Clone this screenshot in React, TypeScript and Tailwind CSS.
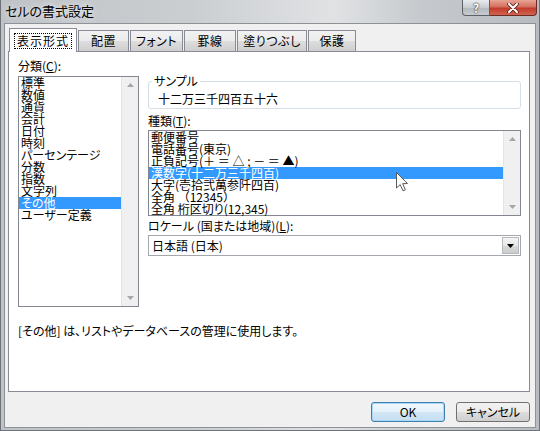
import React from "react";

const categories = [
  "標準",
  "数値",
  "通貨",
  "会計",
  "日付",
  "時刻",
  "パーセンテージ",
  "分数",
  "指数",
  "文字列",
  "その他",
  "ユーザー定義",
];

const kinds: { key: string; node: React.ReactNode; selected?: boolean }[] = [
  { key: "zip", node: "郵便番号" },
  { key: "tel", node: "電話番号(東京)" },
  {
    key: "sign",
    node: (
      <>
        正負記号(<span className="[font-feature-settings:normal]">＋ ＝ △ ; － ＝ ▲</span>)
      </>
    ),
  },
  { key: "kan", node: "漢数字(十二万三千四百)", selected: true },
  { key: "dai", node: "大字(壱拾弐萬参阡四百)" },
  {
    key: "zen",
    node: (
      <>
        全角 <span className="[font-feature-settings:normal]">（12345）</span>
      </>
    ),
  },
  { key: "zen2", node: "全角 桁区切り(12,345)" },
];

const tabs = [
  { label: "配置", w: "w-[51px]" },
  { label: "フォント", w: "w-[53px]" },
  { label: "罫線", w: "w-[52px]" },
  { label: "塗りつぶし", w: "w-[70px]" },
  { label: "保護", w: "w-[48px]" },
];

function Arrow({ up }: { up?: boolean }) {
  return (
    <svg width="7" height="4" viewBox="0 0 7 4">
      <path d={up ? "M0 4L3.5 0L7 4Z" : "M0 0L3.5 4L7 0Z"} fill="#a6a6a6" />
    </svg>
  );
}

function ScrollBar() {
  return (
    <div className="flex w-[17px] flex-col items-center justify-between border-l border-[#e4e4e4] bg-[#f0f0f0] py-[6px]">
      <Arrow up />
      <Arrow />
    </div>
  );
}

function Item({ children, selected }: { children: React.ReactNode; selected?: boolean }) {
  return (
    <div
      className={
        selected
          ? "h-[12px] whitespace-nowrap bg-[#3399ff] pl-[2px] leading-[12px] text-white"
          : "h-[12px] whitespace-nowrap pl-[2px] leading-[12px]"
      }
    >
      {children}
    </div>
  );
}

function Cursor() {
  return (
    <svg
      className="absolute left-[395px] top-[172px]"
      width="13"
      height="20"
      viewBox="0 0 13 20"
    >
      <path
        d="M0.5 0.5L0.5 16L4.2 12.6L7 18.8L9.4 17.8L6.7 11.7L11.5 11.5Z"
        fill="#ffffff"
        stroke="#5a5a5a"
        strokeWidth="1"
        strokeLinejoin="round"
      />
    </svg>
  );
}

export default function App() {
  return (
    <div className="relative flex h-[431px] w-[540px] flex-col overflow-hidden border-x border-b border-[#6e7379] bg-[linear-gradient(90deg,#bfc3c7_0%,#cbced1_35%,#e0e2e4_62%,#c6c9cd_78%,#b8bcc0_100%)] font-['Noto_Sans_CJK_JP','Liberation_Sans',sans-serif] text-[12px] text-black [font-feature-settings:'palt']">
      {/* title bar */}
      <div className="flex h-[23px] shrink-0 items-start justify-between">
        <div className="pl-[4px] pt-[3px] text-[13px] leading-[16px] [text-shadow:0_0_6px_#ffffff]">
          セルの書式設定
        </div>
        <div className="mr-[2px] flex">
          <div className="flex h-[16px] w-[28px] items-center justify-center rounded-bl-[4px] border border-t-0 border-[#5c6168] bg-[linear-gradient(180deg,#e8ebee_0%,#c9cdd2_50%,#b3b8be_51%,#c7ccd1_100%)] text-[12px] font-bold leading-[12px] text-white [text-shadow:0_0_2px_#333,0_0_1px_#333]">
            ?
          </div>
          <div className="flex h-[16px] w-[47px] items-center justify-center rounded-br-[4px] border border-l-0 border-t-0 border-[#6a2b27] bg-[linear-gradient(180deg,#e8a394_0%,#d4705f_45%,#c23b2c_55%,#d3634e_100%)]">
            <svg width="12" height="10" viewBox="0 0 12 10">
              <path d="M2 1L10 9M10 1L2 9" stroke="#5a1d18" strokeWidth="3.6" strokeLinecap="round" />
              <path d="M2 1L10 9M10 1L2 9" stroke="#ffffff" strokeWidth="2" strokeLinecap="round" />
            </svg>
          </div>
        </div>
      </div>

      {/* client area */}
      <div className="mx-[3px] mb-[2px] flex flex-1 flex-col border border-[#8c9298] bg-[#f0f0f0] pl-[3px] pr-[5px] pt-[4px]">
        {/* tabs */}
        <div className="flex h-[23px] items-end pl-[1px]">
          <div className="relative z-10 -mb-px flex h-[24px] w-[68px] items-center justify-center border border-b-0 border-[#898c95] bg-white">
            <span className="border border-dotted border-black px-[2px] leading-[14px] tracking-[1px]">
              表示形式
            </span>
          </div>
          {tabs.map((t) => (
            <div
              key={t.label}
              className={`ml-px flex h-[21px] items-center justify-center border border-b-0 border-[#898c95] bg-[linear-gradient(180deg,#f2f2f2_0%,#ebebeb_50%,#dddddd_51%,#cfcfcf_100%)] tracking-[0.5px] ${t.w}`}
            >
              {t.label}
            </div>
          ))}
        </div>

        {/* panel */}
        <div className="flex h-[341px] flex-col border border-[#898c95] bg-white">
          <div className="flex pl-[9px]">
            {/* left column */}
            <div className="w-[121px]">
              <div className="mt-[8px] h-[12px] leading-[12px]">
                分類(<span className="underline">C</span>):
              </div>
              <div className="mt-[4px] flex h-[231px] border border-[#828790]">
                <div className="flex-1">
                  {categories.map((c) => (
                    <Item key={c} selected={c === "その他"}>
                      {c}
                    </Item>
                  ))}
                </div>
                <ScrollBar />
              </div>
            </div>

            {/* right column */}
            <div className="ml-[9px] w-[373px]">
              <div className="relative mt-[29px] h-[28px] rounded-[3px] border border-[#d5dfe5] pl-[9px] pt-[11px]">
                <span className="absolute -top-[7px] left-[3px] bg-white px-[2px] leading-[12px]">
                  サンプル
                </span>
                <div className="h-[12px] leading-[12px]">十二万三千四百五十六</div>
              </div>

              <div className="mt-[6px] h-[12px] leading-[12px]">
                種類(<span className="underline">T</span>):
              </div>
              <div className="mt-[3px] flex h-[86px] border border-[#828790]">
                <div className="flex-1">
                  {kinds.map((k) => (
                    <Item key={k.key} selected={k.selected}>
                      {k.node}
                    </Item>
                  ))}
                </div>
                <ScrollBar />
              </div>

              <div className="mt-[4px] h-[12px] leading-[12px]">
                ロケール (国または地域)(<span className="underline">L</span>):
              </div>
              <div className="mt-[3px] flex h-[21px] items-center border border-[#a4a7ad] bg-white">
                <div className="flex-1 pl-[3px] leading-[12px]">日本語 (日本)</div>
                <div className="mr-px flex h-[17px] w-[17px] items-center justify-center border border-[#b5b8bd] bg-[linear-gradient(180deg,#f4f4f4_0%,#e8e8e8_50%,#d9d9d9_51%,#cdcdcd_100%)]">
                  <svg width="7" height="4" viewBox="0 0 7 4">
                    <path d="M0 0L3.5 4L7 0Z" fill="#000000" />
                  </svg>
                </div>
              </div>
            </div>
          </div>

          <div className="mt-[18px] h-[12px] pl-[9px] leading-[12px]">
            [その他] は、リストやデータベースの管理に使用します。
          </div>
        </div>

        {/* buttons */}
        <div className="mt-[10px] flex justify-end gap-[11px]">
          <div className="flex h-[20px] w-[74px] items-center justify-center rounded-[3px] border border-[#3c7fb1] bg-[linear-gradient(180deg,#f2f8fc_0%,#e5f1fb_50%,#d3e6f5_51%,#c4def2_100%)] leading-[12px] shadow-[inset_0_0_0_1px_#a9d7f5]">
            OK
          </div>
          <div className="flex h-[20px] w-[74px] items-center justify-center rounded-[3px] border border-[#707070] bg-[linear-gradient(180deg,#f2f2f2_0%,#ebebeb_50%,#dddddd_51%,#cfcfcf_100%)] leading-[12px]">
            キャンセル
          </div>
        </div>
      </div>

      <Cursor />
    </div>
  );
}
